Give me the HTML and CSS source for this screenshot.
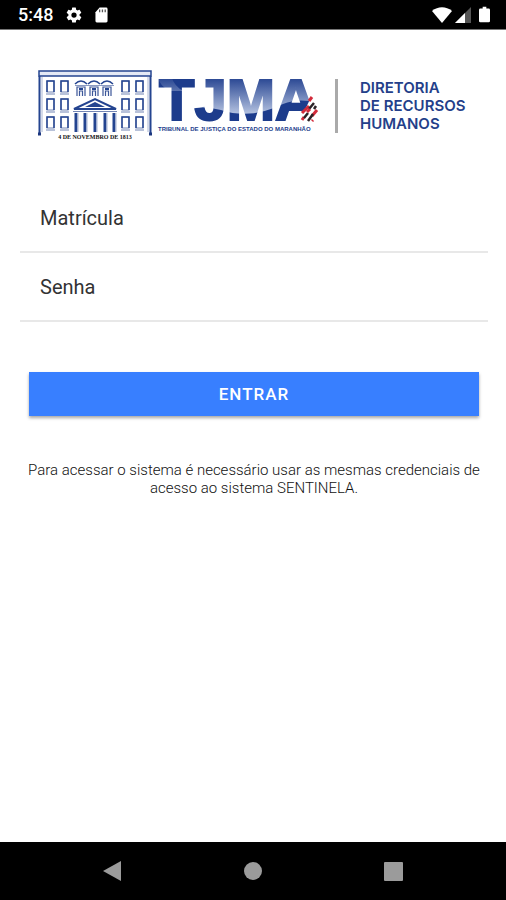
FILE: index.html
```html
<!DOCTYPE html>
<html lang="pt-BR">
<head>
    <meta charset="utf-8">
    <meta name="viewport" content="width=device-width, initial-scale=1">
    <title>TJMA - Diretoria de Recursos Humanos</title>
    <link rel="stylesheet" href="styles.css">
</head>

<body>
    <div class="status-bar">
        <div class="status-left">
            <span class="clock">5:48</span>
            <svg width="18" height="18" viewBox="0 0 24 24" fill="#fff">
                <path fill-rule="evenodd" d="M19.4 13a7.500 7.500 0 0 0 0-2l2.100-1.650a.5.5 0 0 0 .12-.64l-2-3.460a.5.5 0 0 0-.61-.22l-2.490 1a7.300 7.300 0 0 0-1.690-.98l-.38-2.650A.5.5 0 0 0 14 2h-4a.5.5 0 0 0-.49.420l-.38 2.650c-.61.250-1.170.590-1.690.980l-2.490-1a.5.5 0 0 0-.61.220l-2 3.460a.5.5 0 0 0 .12.640L4.570 11a7.900 7.900 0 0 0 0 2l-2.110 1.650a.5.5 0 0 0-.12.640l2 3.460c.12.220.390.300.610.220l2.490-1c.52.400 1.080.730 1.690.980l.38 2.650c.03.240.240.420.490.420h4c.25 0 .46-.18.490-.42l.38-2.650c.61-.25 1.170-.59 1.690-.98l2.490 1c.23.090.490 0 .61-.22l2-3.460a.5.5 0 0 0-.12-.64zM12 15.500a3.500 3.500 0 1 1 0-7 3.500 3.500 0 0 1 0 7z"/>
            </svg>
            <svg width="13" height="16" viewBox="0 0 14 16">
                <path d="M5 0h7a1.500 1.500 0 0 1 1.500 1.500v13A1.500 1.500 0 0 1 12 16H2a1.500 1.500 0 0 1-1.500-1.500V5z" fill="#fff"/>
                <path d="M5 2v3M8 2v3M11 2v3" stroke="#555" stroke-width="1.400"/>
            </svg>
        </div>
        <div class="status-right">
            <svg width="20" height="16" viewBox="0 0 20 16">
                <path d="M0 4C6-1 14-1 20 4L10 16z" fill="#fff"/>
            </svg>
            <svg width="16" height="16" viewBox="0 0 16 16">
                <path d="M0 16L16 0v16z" fill="#555"/>
                <path d="M0 16L10 6v10z" fill="#fff"/>
            </svg>
            <svg class="battery" width="11" height="17" viewBox="0 0 12 17">
                <path d="M4 0h4v2h2.500A1.500 1.500 0 0 1 12 3.500v12a1.500 1.500 0 0 1-1.500 1.500h-9A1.500 1.500 0 0 1 0 15.500v-12A1.500 1.500 0 0 1 1.500 2H4z" fill="#fff"/>
            </svg>
        </div>
    </div>

    <main class="content">
        <div class="logo">
            <svg class="logo-tjma" viewBox="0 0 282 72" role="img" aria-label="TJMA">
                <defs>
                    <linearGradient id="brilho" x1="0" y1="0" x2="0" y2="1">
                        <stop offset="0" stop-color="#1d3c8c"/>
                        <stop offset="1" stop-color="#b4c2e0"/>
                    </linearGradient>
                    <pattern id="azul" width="282" height="72" patternUnits="userSpaceOnUse">
                        <rect width="282" height="72" fill="#1d3c8c"/>
                        <path d="M119 5h14q3 12 13 16h14V5h111v26q-14-2-26 3-32 16-62 6-18-5-37 0V21h-14Q122 17 119 5z" fill="url(#brilho)"/>
                    </pattern>
                    <g id="janela">
                        <rect x="1" y="1" width="7" height="11" fill="#fff" stroke="#7385b4"/>
                        <path d="M1 12V1h7v11" fill="none" stroke="#244490" stroke-width="1.500"/>
                        <path d="M0 14h9" stroke="#7385b4"/>
                    </g>
                    <g id="arco">
                        <path d="M0 4Q6-2 12 4" fill="none" stroke="#244490" stroke-width="1.500"/>
                        <path d="M0 5.500h13" stroke="#8b9ac2"/>
                        <path d="M2 16V7h8v9M4.500 16v-5h3v5" fill="none" stroke="#3c5799" stroke-width="1.200"/>
                        <path d="M4 9h4" stroke="#244490" stroke-width="2"/>
                    </g>
                </defs>

                <!-- palácio -->
                <path d="M1 1h112v5H1z" fill="#e4e9f5" stroke="#244490" stroke-width="1.500"/>
                <path d="M1.500 6v57M112.500 6v57" stroke="#244490" stroke-width="2"/>
                <path d="M4 7v55M110 7v55" stroke="#aab6d4"/>
                <path d="M0 64h3M111 64h3" stroke="#1c377f" stroke-width="3"/>
                <use href="#janela" x="8" y="10"/>
                <use href="#janela" x="22" y="10"/>
                <use href="#janela" x="83" y="10"/>
                <use href="#janela" x="97" y="10"/>
                <use href="#janela" x="8" y="28"/>
                <use href="#janela" x="22" y="28"/>
                <use href="#janela" x="83" y="28"/>
                <use href="#janela" x="97" y="28"/>
                <use href="#janela" x="8" y="46"/>
                <use href="#janela" x="22" y="46"/>
                <use href="#janela" x="83" y="46"/>
                <use href="#janela" x="97" y="46"/>
                <use href="#arco" x="37" y="10"/>
                <use href="#arco" x="50" y="10"/>
                <use href="#arco" x="63" y="10"/>
                <path d="M36 39L57 29l21 10z" fill="#fff" stroke="#244490" stroke-width="2"/>
                <path d="M47 37l10-5 10 5z" fill="#244490"/>
                <path d="M35 41.500h44" stroke="#7385b4"/>
                <path d="M38 43v19M47 43v19M57 43v19M67 43v19M76 43v19" stroke="#244490" stroke-width="3"/>
                <path d="M40 43v19M49 43v19M59 43v19M69 43v19M78 43v19" stroke="#aab6d4"/>
                <text class="data" x="57" y="69" text-anchor="middle">4 DE NOVEMBRO DE 1813</text>

                <!-- sigla -->
                <text class="sigla" x="121" y="50" fill="url(#azul)" stroke="url(#azul)">TJMA</text>
                <text class="nome" x="120" y="61">TRIBUNAL DE JUSTIÇA DO ESTADO DO MARANHÃO</text>
                <g fill="none">
                    <path d="M261 53l12-26 8 3v23z" fill="#fff"/>
                    <path d="M264 43l7-7M271 31l3-4M264 50l2-3M274 46l5-6M274 51l1-1" stroke="#d32b3b" stroke-width="3"/>
                    <path d="M266 48l4-5M271 39l5-6M270 51l5-7M276 39l2-3" stroke="#2b2226" stroke-width="2.500"/>
                    <path d="M269 42l3-3" stroke="#d32b3b" stroke-width="3"/>
                </g>
            </svg>
            <div class="logo-setor">DIRETORIA<br>DE RECURSOS<br>HUMANOS</div>
        </div>

        <form method="post" action="#">
            <div class="item">
                <label for="matricula">Matrícula</label>
                <input type="text" name="matricula" id="matricula">
            </div>
            <div class="item">
                <label for="senha">Senha</label>
                <input type="password" name="senha" id="senha">
            </div>
            <button type="submit" class="btn-entrar">ENTRAR</button>
        </form>

        <p class="aviso">Para acessar o sistema é necessário usar as mesmas credenciais de acesso ao sistema SENTINELA.</p>
    </main>

    <nav class="nav-bar">
        <button type="button" aria-label="Voltar">
            <svg width="20" height="22" viewBox="0 0 20 22"><path d="M0 11L18 1v20z" fill="#9b9b9b"/></svg>
        </button>
        <button type="button" aria-label="Início">
            <svg width="20" height="22" viewBox="0 0 20 22"><circle cx="10" cy="11" r="9" fill="#9b9b9b"/></svg>
        </button>
        <button type="button" aria-label="Recentes">
            <svg width="20" height="22" viewBox="0 0 20 22"><rect x="1" y="2" width="19" height="19" rx="1" fill="#9b9b9b"/></svg>
        </button>
    </nav>
</body>
</html>
```

FILE: styles.css
```css
* {
    box-sizing: border-box;
}
body {
    display: flex;
    flex-direction: column;
    min-height: 100vh;
    margin: 0;
    font-family: Roboto, "Liberation Sans", sans-serif;
    color: #333;
    background-color: #fff;
}
svg {
    display: block;
}
.status-bar {
    display: flex;
    justify-content: space-between;
    align-items: center;
    height: 30px;
    padding: 0 16px 0 18px;
    background-color: #000;
    border-bottom: 1px solid #777;
}
.status-left,
.status-right {
    display: flex;
    align-items: center;
}
.status-left {
    gap: 12px;
}
.status-right {
    gap: 3px;
}
.battery {
    margin-left: 5px;
}
.clock {
    font-size: 18px;
    font-weight: 500;
    line-height: 30px;
    color: #fff;
}
.content {
    flex: 1;
    padding: 40px 18px 0 20px;
}
.logo {
    display: flex;
    align-items: center;
    padding: 0 18px;
}
.logo-tjma {
    flex: none;
    width: 282px;
    height: 72px;
    overflow: visible;
}
.sigla {
    font-family: "Liberation Sans", sans-serif;
    font-size: 58px;
    font-weight: bold;
    stroke-width: 2px;
}
.nome {
    font-family: "Liberation Sans", sans-serif;
    font-size: 6px;
    font-weight: bold;
    fill: #1d3c8c;
}
.data {
    font-family: "Liberation Serif", serif;
    font-size: 6px;
    font-weight: bold;
    fill: #111;
}
.logo-setor {
    margin-left: 15px;
    padding: 0 0 0 22px;
    border-left: 3px solid #aaa;
    font-family: Inter, sans-serif;
    font-size: 15px;
    font-weight: 600;
    line-height: 18px;
    white-space: nowrap;
    color: #243f8a;
}
form {
    padding-top: 42px;
}
.item {
    display: flex;
    align-items: center;
    height: 69px;
    padding-left: 20px;
    border-bottom: 2px solid #e8e8e8;
}
.item label {
    font-size: 20px;
    line-height: 24px;
}
.item input {
    flex: 1;
    min-width: 0;
    padding: 10px;
    border: none;
    outline: none;
    background: transparent;
    font-family: inherit;
    font-size: 20px;
}
.btn-entrar {
    display: block;
    width: calc(100% - 18px);
    height: 44px;
    margin: 50px auto 0 9px;
    border: none;
    background-color: #387fff;
    box-shadow: 0 2px 3px rgba(0, 0, 0, 0.35);
    font-family: inherit;
    font-size: 17px;
    font-weight: 500;
    letter-spacing: 1px;
    color: #fff;
    cursor: pointer;
}
.aviso {
    margin: 45px 0 0;
    font-size: 15px;
    font-weight: 300;
    line-height: 18px;
    text-align: center;
    color: #111;
}
.nav-bar {
    display: flex;
    justify-content: center;
    align-items: center;
    gap: 120px;
    height: 58px;
    background-color: #000;
}
.nav-bar button {
    padding: 0;
    border: none;
    background: none;
    cursor: pointer;
}
```
